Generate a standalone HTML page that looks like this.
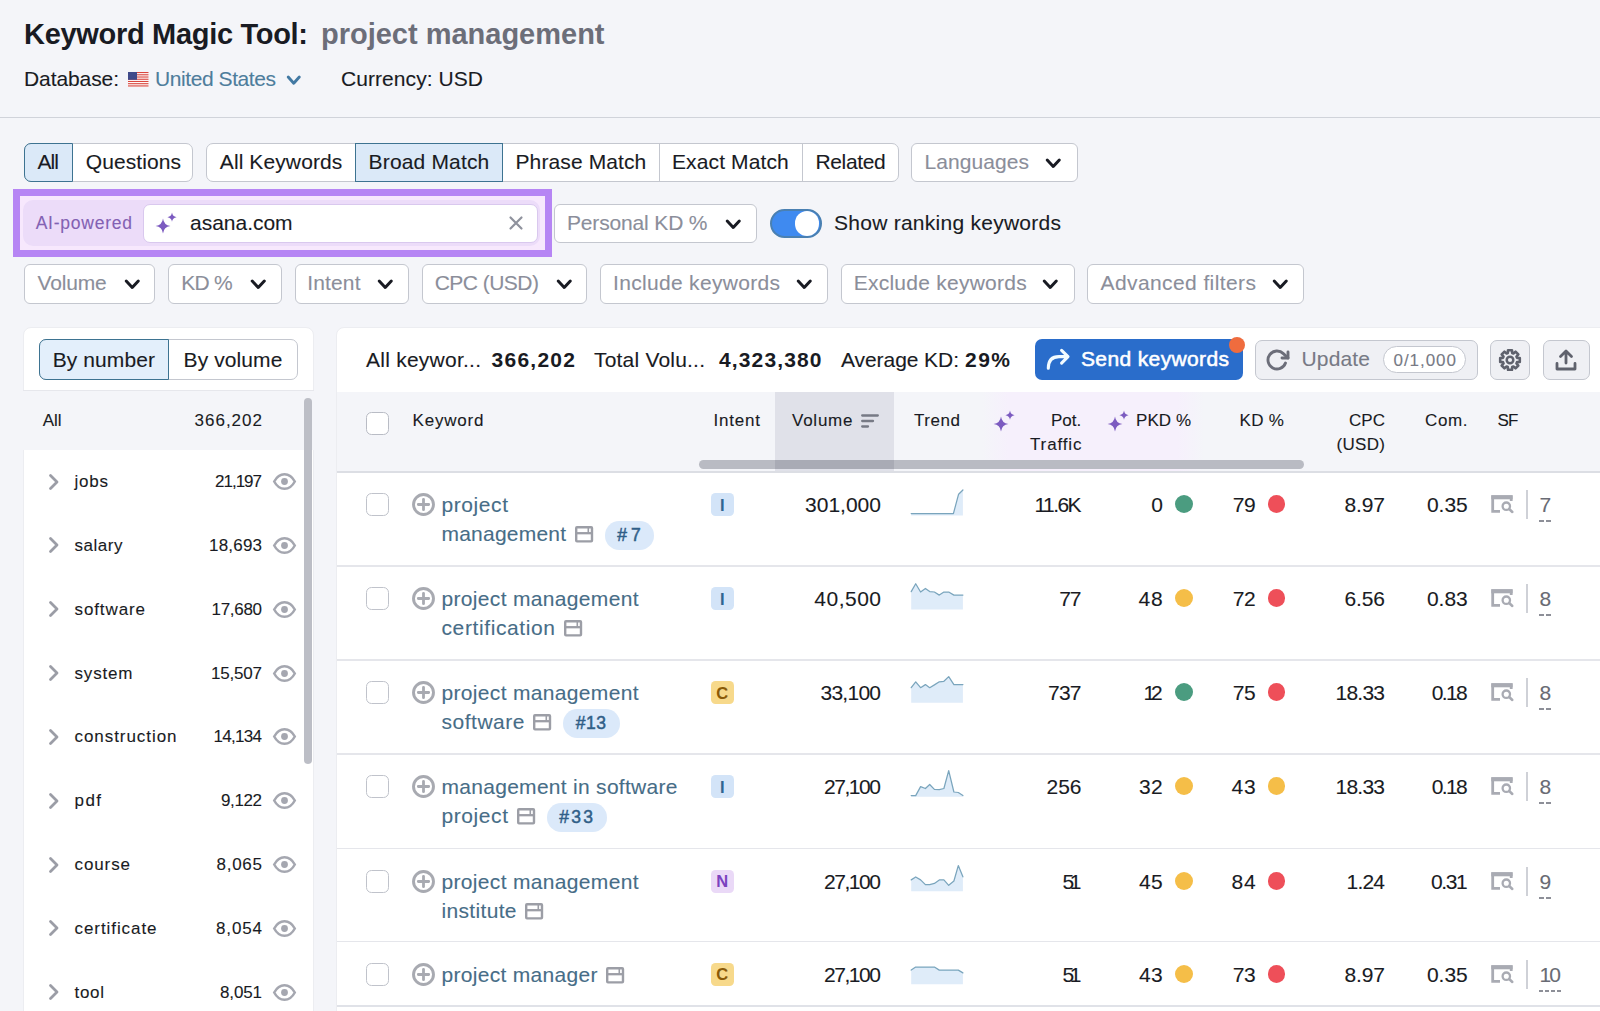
<!DOCTYPE html>
<html lang="en"><head><meta charset="utf-8"><title>Keyword Magic Tool</title>
<style>
html,body{margin:0;padding:0}
body{width:1600px;height:1011px;overflow:hidden;background:#f4f5f9;font-family:"Liberation Sans", Arial, sans-serif;position:relative}
.a{position:absolute;box-sizing:border-box}
.t{position:absolute;white-space:nowrap;-webkit-text-stroke:0.1px currentColor}
svg{position:absolute;overflow:visible}
</style></head><body>
<svg style="left:128px;top:72px" width="20.5" height="14.5" viewBox="0 0 20.5 14.5" ><rect width="20.5" height="14.5" fill="#fff"/><rect y="0.00" width="20.5" height="1.12" fill="#d9463f"/><rect y="2.23" width="20.5" height="1.12" fill="#d9463f"/><rect y="4.46" width="20.5" height="1.12" fill="#d9463f"/><rect y="6.69" width="20.5" height="1.12" fill="#d9463f"/><rect y="8.92" width="20.5" height="1.12" fill="#d9463f"/><rect y="11.15" width="20.5" height="1.12" fill="#d9463f"/><rect y="13.38" width="20.5" height="1.12" fill="#d9463f"/><rect width="9" height="7.8" fill="#3f4a8a"/></svg>
<svg style="left:287.25px;top:76.4px" width="13.5" height="8.2" viewBox="0 0 13.5 8.2" ><path d="M1.2 1 L6.75 7.199999999999999 L12.3 1" fill="none" stroke="#4279a3" stroke-width="2.9" stroke-linecap="round" stroke-linejoin="round"/></svg>
<div class="a" style="left:0px;top:116.8px;width:1600px;height:1.6px;background:#d0d3da;"></div>
<div class="a" style="left:24px;top:142.7px;width:169.3px;height:39.6px;background:#fff;border:1px solid #c4c7cf;border-radius:7px;"></div>
<div class="a" style="left:24px;top:142.7px;width:49px;height:39.6px;background:#dbe9f8;border:1.4px solid #3d7391;border-radius:7px 0 0 7px;"></div>
<div class="a" style="left:206px;top:142.7px;width:693.3px;height:39.6px;background:#fff;border:1px solid #c4c7cf;border-radius:7px;"></div>
<div class="a" style="left:354.5px;top:142.7px;width:148.3px;height:39.6px;background:#dbe9f8;border:1.4px solid #3d7391;"></div>
<div class="a" style="left:659px;top:142.7px;width:1px;height:39.6px;background:#c4c7cf;"></div>
<div class="a" style="left:801.8px;top:142.7px;width:1px;height:39.6px;background:#c4c7cf;"></div>
<div class="a" style="left:911px;top:142.7px;width:166.5px;height:39.6px;background:#fff;border:1px solid #c4c7cf;border-radius:6px;"></div>
<svg style="left:1045.75px;top:158.75px" width="14.5" height="8.5" viewBox="0 0 14.5 8.5" ><path d="M1.2 1 L7.25 7.5 L13.3 1" fill="none" stroke="#191b23" stroke-width="3" stroke-linecap="round" stroke-linejoin="round"/></svg>
<div class="a" style="left:13px;top:189px;width:538.5px;height:68px;background:#f7e8fd;border:7px solid #b685f4;"></div>
<div class="a" style="left:23.3px;top:200px;width:517px;height:46.3px;background:#ecdcf9;border-radius:10px;"></div>
<div class="a" style="left:142.6px;top:203.6px;width:395.4px;height:39px;background:#fff;border:1px solid #d9c8ee;border-radius:7px;"></div>
<svg style="left:151px;top:206.3px" width="30" height="30" viewBox="0 0 30 30" ><path d="M12 12.6 Q12.814 19.186 19.4 20 Q12.814 20.814 12 27.4 Q11.186 20.814 4.6 20 Q11.186 19.186 12 12.6 Z M21 6.6 Q21.506 10.693999999999999 25.6 11.2 Q21.506 11.706 21 15.799999999999999 Q20.494 11.706 16.4 11.2 Q20.494 10.693999999999999 21 6.6 Z" fill="#7c5bc0"/></svg>
<svg style="left:508.5px;top:215.5px" width="14" height="14" viewBox="0 0 14 14" ><path d="M1.5 1.5 L12.5 12.5 M12.5 1.5 L1.5 12.5" stroke="#8f929d" stroke-width="2.2" stroke-linecap="round"/></svg>
<div class="a" style="left:554px;top:204px;width:203px;height:38.7px;background:#fff;border:1px solid #c4c7cf;border-radius:6px;"></div>
<svg style="left:725.75px;top:219.6px" width="14.5" height="8.5" viewBox="0 0 14.5 8.5" ><path d="M1.2 1 L7.25 7.5 L13.3 1" fill="none" stroke="#191b23" stroke-width="3" stroke-linecap="round" stroke-linejoin="round"/></svg>
<div class="a" style="left:769.7px;top:208.8px;width:52.4px;height:29.2px;background:#3f8af0;border:2px solid #4a80b2;border-radius:14.6px;"></div>
<div class="a" style="left:794.6px;top:211.3px;width:24.6px;height:24.4px;background:#fff;border-radius:12.3px;"></div>
<div class="a" style="left:24px;top:264.4px;width:131px;height:39.4px;background:#fff;border:1px solid #c4c7cf;border-radius:6px;"></div>
<svg style="left:124.75px;top:280.34999999999997px" width="14.5" height="8.5" viewBox="0 0 14.5 8.5" ><path d="M1.2 1 L7.25 7.5 L13.3 1" fill="none" stroke="#191b23" stroke-width="3" stroke-linecap="round" stroke-linejoin="round"/></svg>
<div class="a" style="left:168.4px;top:264.4px;width:113.6px;height:39.4px;background:#fff;border:1px solid #c4c7cf;border-radius:6px;"></div>
<svg style="left:250.75px;top:280.34999999999997px" width="14.5" height="8.5" viewBox="0 0 14.5 8.5" ><path d="M1.2 1 L7.25 7.5 L13.3 1" fill="none" stroke="#191b23" stroke-width="3" stroke-linecap="round" stroke-linejoin="round"/></svg>
<div class="a" style="left:295px;top:264.4px;width:113.80000000000001px;height:39.4px;background:#fff;border:1px solid #c4c7cf;border-radius:6px;"></div>
<svg style="left:377.75px;top:280.34999999999997px" width="14.5" height="8.5" viewBox="0 0 14.5 8.5" ><path d="M1.2 1 L7.25 7.5 L13.3 1" fill="none" stroke="#191b23" stroke-width="3" stroke-linecap="round" stroke-linejoin="round"/></svg>
<div class="a" style="left:422.3px;top:264.4px;width:164.7px;height:39.4px;background:#fff;border:1px solid #c4c7cf;border-radius:6px;"></div>
<svg style="left:556.75px;top:280.34999999999997px" width="14.5" height="8.5" viewBox="0 0 14.5 8.5" ><path d="M1.2 1 L7.25 7.5 L13.3 1" fill="none" stroke="#191b23" stroke-width="3" stroke-linecap="round" stroke-linejoin="round"/></svg>
<div class="a" style="left:600px;top:264.4px;width:228px;height:39.4px;background:#fff;border:1px solid #c4c7cf;border-radius:6px;"></div>
<svg style="left:797.25px;top:280.34999999999997px" width="14.5" height="8.5" viewBox="0 0 14.5 8.5" ><path d="M1.2 1 L7.25 7.5 L13.3 1" fill="none" stroke="#191b23" stroke-width="3" stroke-linecap="round" stroke-linejoin="round"/></svg>
<div class="a" style="left:841px;top:264.4px;width:233.5px;height:39.4px;background:#fff;border:1px solid #c4c7cf;border-radius:6px;"></div>
<svg style="left:1043.05px;top:280.34999999999997px" width="14.5" height="8.5" viewBox="0 0 14.5 8.5" ><path d="M1.2 1 L7.25 7.5 L13.3 1" fill="none" stroke="#191b23" stroke-width="3" stroke-linecap="round" stroke-linejoin="round"/></svg>
<div class="a" style="left:1087px;top:264.4px;width:217px;height:39.4px;background:#fff;border:1px solid #c4c7cf;border-radius:6px;"></div>
<svg style="left:1272.75px;top:280.34999999999997px" width="14.5" height="8.5" viewBox="0 0 14.5 8.5" ><path d="M1.2 1 L7.25 7.5 L13.3 1" fill="none" stroke="#191b23" stroke-width="3" stroke-linecap="round" stroke-linejoin="round"/></svg>
<div class="a" style="left:22.5px;top:327.3px;width:291.5px;height:700px;background:#fff;border:1px solid #ecedf1;border-radius:8px 8px 0 0;"></div>
<div class="a" style="left:38.6px;top:339.4px;width:259.2px;height:40.3px;background:#fff;border:1px solid #c4c7cf;border-radius:7px;"></div>
<div class="a" style="left:38.6px;top:339.4px;width:130px;height:40.3px;background:#e3effb;border:1.4px solid #3d7391;border-radius:7px 0 0 7px;"></div>
<div class="a" style="left:23px;top:390px;width:291px;height:1px;background:#e6e7ec;"></div>
<div class="a" style="left:23px;top:391px;width:290.5px;height:58.5px;background:#f4f5f9;"></div>
<div class="a" style="left:303.6px;top:398px;width:8px;height:366px;background:#bcbec6;border-radius:4px;"></div>
<svg style="left:48.5px;top:473.5px" width="10" height="16" viewBox="0 0 10 16" ><path d="M1.5 1.5 L8 8 L1.5 14.5" fill="none" stroke="#9b9da6" stroke-width="2.8" stroke-linecap="round" stroke-linejoin="round"/></svg>
<svg style="left:273px;top:473.0px" width="23" height="17" viewBox="0 0 23 17" ><path d="M1.2 8.5 C4 3.2 7.6 1.2 11.5 1.2 C15.4 1.2 19 3.2 21.8 8.5 C19 13.8 15.4 15.8 11.5 15.8 C7.6 15.8 4 13.8 1.2 8.5 Z" fill="none" stroke="#a5a7b0" stroke-width="2.5"/><circle cx="11.5" cy="8.5" r="3.4" fill="#a5a7b0"/></svg>
<svg style="left:48.5px;top:537.35px" width="10" height="16" viewBox="0 0 10 16" ><path d="M1.5 1.5 L8 8 L1.5 14.5" fill="none" stroke="#9b9da6" stroke-width="2.8" stroke-linecap="round" stroke-linejoin="round"/></svg>
<svg style="left:273px;top:536.85px" width="23" height="17" viewBox="0 0 23 17" ><path d="M1.2 8.5 C4 3.2 7.6 1.2 11.5 1.2 C15.4 1.2 19 3.2 21.8 8.5 C19 13.8 15.4 15.8 11.5 15.8 C7.6 15.8 4 13.8 1.2 8.5 Z" fill="none" stroke="#a5a7b0" stroke-width="2.5"/><circle cx="11.5" cy="8.5" r="3.4" fill="#a5a7b0"/></svg>
<svg style="left:48.5px;top:601.2px" width="10" height="16" viewBox="0 0 10 16" ><path d="M1.5 1.5 L8 8 L1.5 14.5" fill="none" stroke="#9b9da6" stroke-width="2.8" stroke-linecap="round" stroke-linejoin="round"/></svg>
<svg style="left:273px;top:600.7px" width="23" height="17" viewBox="0 0 23 17" ><path d="M1.2 8.5 C4 3.2 7.6 1.2 11.5 1.2 C15.4 1.2 19 3.2 21.8 8.5 C19 13.8 15.4 15.8 11.5 15.8 C7.6 15.8 4 13.8 1.2 8.5 Z" fill="none" stroke="#a5a7b0" stroke-width="2.5"/><circle cx="11.5" cy="8.5" r="3.4" fill="#a5a7b0"/></svg>
<svg style="left:48.5px;top:665.05px" width="10" height="16" viewBox="0 0 10 16" ><path d="M1.5 1.5 L8 8 L1.5 14.5" fill="none" stroke="#9b9da6" stroke-width="2.8" stroke-linecap="round" stroke-linejoin="round"/></svg>
<svg style="left:273px;top:664.55px" width="23" height="17" viewBox="0 0 23 17" ><path d="M1.2 8.5 C4 3.2 7.6 1.2 11.5 1.2 C15.4 1.2 19 3.2 21.8 8.5 C19 13.8 15.4 15.8 11.5 15.8 C7.6 15.8 4 13.8 1.2 8.5 Z" fill="none" stroke="#a5a7b0" stroke-width="2.5"/><circle cx="11.5" cy="8.5" r="3.4" fill="#a5a7b0"/></svg>
<svg style="left:48.5px;top:728.9px" width="10" height="16" viewBox="0 0 10 16" ><path d="M1.5 1.5 L8 8 L1.5 14.5" fill="none" stroke="#9b9da6" stroke-width="2.8" stroke-linecap="round" stroke-linejoin="round"/></svg>
<svg style="left:273px;top:728.4px" width="23" height="17" viewBox="0 0 23 17" ><path d="M1.2 8.5 C4 3.2 7.6 1.2 11.5 1.2 C15.4 1.2 19 3.2 21.8 8.5 C19 13.8 15.4 15.8 11.5 15.8 C7.6 15.8 4 13.8 1.2 8.5 Z" fill="none" stroke="#a5a7b0" stroke-width="2.5"/><circle cx="11.5" cy="8.5" r="3.4" fill="#a5a7b0"/></svg>
<svg style="left:48.5px;top:792.75px" width="10" height="16" viewBox="0 0 10 16" ><path d="M1.5 1.5 L8 8 L1.5 14.5" fill="none" stroke="#9b9da6" stroke-width="2.8" stroke-linecap="round" stroke-linejoin="round"/></svg>
<svg style="left:273px;top:792.25px" width="23" height="17" viewBox="0 0 23 17" ><path d="M1.2 8.5 C4 3.2 7.6 1.2 11.5 1.2 C15.4 1.2 19 3.2 21.8 8.5 C19 13.8 15.4 15.8 11.5 15.8 C7.6 15.8 4 13.8 1.2 8.5 Z" fill="none" stroke="#a5a7b0" stroke-width="2.5"/><circle cx="11.5" cy="8.5" r="3.4" fill="#a5a7b0"/></svg>
<svg style="left:48.5px;top:856.6px" width="10" height="16" viewBox="0 0 10 16" ><path d="M1.5 1.5 L8 8 L1.5 14.5" fill="none" stroke="#9b9da6" stroke-width="2.8" stroke-linecap="round" stroke-linejoin="round"/></svg>
<svg style="left:273px;top:856.1px" width="23" height="17" viewBox="0 0 23 17" ><path d="M1.2 8.5 C4 3.2 7.6 1.2 11.5 1.2 C15.4 1.2 19 3.2 21.8 8.5 C19 13.8 15.4 15.8 11.5 15.8 C7.6 15.8 4 13.8 1.2 8.5 Z" fill="none" stroke="#a5a7b0" stroke-width="2.5"/><circle cx="11.5" cy="8.5" r="3.4" fill="#a5a7b0"/></svg>
<svg style="left:48.5px;top:920.45px" width="10" height="16" viewBox="0 0 10 16" ><path d="M1.5 1.5 L8 8 L1.5 14.5" fill="none" stroke="#9b9da6" stroke-width="2.8" stroke-linecap="round" stroke-linejoin="round"/></svg>
<svg style="left:273px;top:919.95px" width="23" height="17" viewBox="0 0 23 17" ><path d="M1.2 8.5 C4 3.2 7.6 1.2 11.5 1.2 C15.4 1.2 19 3.2 21.8 8.5 C19 13.8 15.4 15.8 11.5 15.8 C7.6 15.8 4 13.8 1.2 8.5 Z" fill="none" stroke="#a5a7b0" stroke-width="2.5"/><circle cx="11.5" cy="8.5" r="3.4" fill="#a5a7b0"/></svg>
<svg style="left:48.5px;top:984.3px" width="10" height="16" viewBox="0 0 10 16" ><path d="M1.5 1.5 L8 8 L1.5 14.5" fill="none" stroke="#9b9da6" stroke-width="2.8" stroke-linecap="round" stroke-linejoin="round"/></svg>
<svg style="left:273px;top:983.8px" width="23" height="17" viewBox="0 0 23 17" ><path d="M1.2 8.5 C4 3.2 7.6 1.2 11.5 1.2 C15.4 1.2 19 3.2 21.8 8.5 C19 13.8 15.4 15.8 11.5 15.8 C7.6 15.8 4 13.8 1.2 8.5 Z" fill="none" stroke="#a5a7b0" stroke-width="2.5"/><circle cx="11.5" cy="8.5" r="3.4" fill="#a5a7b0"/></svg>
<div class="a" style="left:336px;top:327.3px;width:1270px;height:700px;background:#fff;border:1px solid #ecedf1;border-radius:8px 0 0 0;"></div>
<div class="a" style="left:1034.5px;top:339.4px;width:208.7px;height:40.2px;background:#2a6dcb;border-radius:7px;"></div>
<svg style="left:1040px;top:345px" width="34" height="30" viewBox="0 0 34 30" ><path d="M8.3 23.3 C8.3 15.2 12 11.6 19 11.6 L27.6 11.6 M21.6 5.3 L28 11.6 L21.6 18.1" fill="none" stroke="#f2fbff" stroke-width="3.1" stroke-linecap="round" stroke-linejoin="round"/></svg>
<div class="a" style="left:1228.8px;top:336.9px;width:16.5px;height:16.5px;background:#ef6c3e;border-radius:8.25px;"></div>
<div class="a" style="left:1255px;top:339.8px;width:222.7px;height:39.8px;background:#eff0f4;border:1px solid #c4c7cf;border-radius:7px;"></div>
<svg style="left:1265.3px;top:347.6px" width="24" height="24" viewBox="0 0 24 24" ><polyline points="23 4 23 10 17 10" fill="none" stroke="#6c6e79" stroke-width="2.9" stroke-linecap="round" stroke-linejoin="round"/><path d="M20.49 15a9 9 0 1 1-2.12-9.36L23 10" fill="none" stroke="#6c6e79" stroke-width="2.9" stroke-linecap="round" stroke-linejoin="round"/></svg>
<div class="a" style="left:1383px;top:346px;width:83px;height:27px;background:#fff;border:1px solid #c4c7cf;border-radius:13.5px;"></div>
<div class="a" style="left:1490px;top:339.8px;width:40px;height:39.8px;background:#eff0f4;border:1px solid #c4c7cf;border-radius:7px;"></div>
<svg style="left:1499.3px;top:349px" width="22" height="22" viewBox="0 0 22 22" ><path d="M17.97 8.84 L20.80 9.01 L20.80 12.99 L17.97 13.16 L17.46 14.41 L19.33 16.53 L16.53 19.33 L14.41 17.46 L13.16 17.97 L12.99 20.80 L9.01 20.80 L8.84 17.97 L7.59 17.46 L5.47 19.33 L2.67 16.53 L4.54 14.41 L4.03 13.16 L1.20 12.99 L1.20 9.01 L4.03 8.84 L4.54 7.59 L2.67 5.47 L5.47 2.67 L7.59 4.54 L8.84 4.03 L9.01 1.20 L12.99 1.20 L13.16 4.03 L14.41 4.54 L16.53 2.67 L19.33 5.47 L17.46 7.59 Z" fill="none" stroke="#5f626d" stroke-width="2.6" stroke-linejoin="round"/><circle cx="11" cy="11" r="3.3" fill="none" stroke="#5f626d" stroke-width="2.5"/></svg>
<div class="a" style="left:1542.5px;top:339.8px;width:47px;height:39.8px;background:#eff0f4;border:1px solid #c4c7cf;border-radius:7px;"></div>
<svg style="left:1555px;top:348.5px" width="22" height="22" viewBox="0 0 22 22" ><path d="M11 14 L11 2.5 M5.5 7.5 L11 2 L16.5 7.5" fill="none" stroke="#5f626d" stroke-width="2.8" stroke-linecap="round" stroke-linejoin="round"/><path d="M2 14.5 L2 20 L20 20 L20 14.5" fill="none" stroke="#5f626d" stroke-width="2.8" stroke-linecap="round" stroke-linejoin="round"/></svg>
<div class="a" style="left:336.5px;top:392px;width:1264px;height:79.5px;background:#f4f5f9;"></div>
<div class="a" style="left:982px;top:392px;width:222px;height:79.5px;background:linear-gradient(90deg,rgba(246,240,252,0) 0,#f6f0fc 12%,#f6f0fc 88%,rgba(246,240,252,0) 100%);"></div>
<div class="a" style="left:775px;top:392px;width:119px;height:79.5px;background:#e0e1e9;"></div>
<div class="a" style="left:336.5px;top:471.3px;width:1264px;height:1.4px;background:#dcdee4;"></div>
<div class="a" style="left:699.4px;top:460px;width:604.6px;height:9px;background:#b9bbc3;border-radius:4.5px;"></div>
<div class="a" style="left:775px;top:460px;width:119px;height:9px;background:#a9abb5;"></div>
<div class="a" style="left:366px;top:412px;width:22.6px;height:22.6px;background:#fff;border:1.3px solid #b9bcc5;border-radius:5.5px;"></div>
<svg style="left:861px;top:413.5px" width="18" height="14" viewBox="0 0 18 14" ><path d="M1.2 1.5 H16.8 M1.2 7 H12 M1.2 12.5 H7" stroke="#777a85" stroke-width="2.3" stroke-linecap="round"/></svg>
<svg style="left:988.7px;top:403.7px" width="30" height="30" viewBox="0 0 30 30" ><path d="M12 12.6 Q12.814 19.186 19.4 20 Q12.814 20.814 12 27.4 Q11.186 20.814 4.6 20 Q11.186 19.186 12 12.6 Z M21 6.6 Q21.506 10.693999999999999 25.6 11.2 Q21.506 11.706 21 15.799999999999999 Q20.494 11.706 16.4 11.2 Q20.494 10.693999999999999 21 6.6 Z" fill="#7c5bc0"/></svg>
<svg style="left:1102.7px;top:403.7px" width="30" height="30" viewBox="0 0 30 30" ><path d="M12 12.6 Q12.814 19.186 19.4 20 Q12.814 20.814 12 27.4 Q11.186 20.814 4.6 20 Q11.186 19.186 12 12.6 Z M21 6.6 Q21.506 10.693999999999999 25.6 11.2 Q21.506 11.706 21 15.799999999999999 Q20.494 11.706 16.4 11.2 Q20.494 10.693999999999999 21 6.6 Z" fill="#7c5bc0"/></svg>
<div class="a" style="left:366px;top:493.3px;width:22.6px;height:22.6px;background:#fff;border:1.4px solid #c0c3cb;border-radius:5.5px;"></div>
<svg style="left:412px;top:493.0px" width="23" height="23" viewBox="0 0 23 23" ><circle cx="11.5" cy="11.5" r="10" fill="none" stroke="#a8aab1" stroke-width="2.9"/><path d="M6.3 11.5 H16.7 M11.5 6.3 V16.7" stroke="#a8aab1" stroke-width="2.8" stroke-linecap="round"/></svg>
<svg style="left:574.8px;top:526.3000000000001px" width="18.2" height="16.6" viewBox="0 0 18.2 16.6" ><rect x="1.2" y="1.2" width="15.8" height="14.2" rx="0.8" fill="none" stroke="#9c9ea6" stroke-width="2.4"/><path d="M1.2 7.2 H17" stroke="#9c9ea6" stroke-width="2.3"/><path d="M13.3 1.2 V7.2" stroke="#9c9ea6" stroke-width="1.6"/></svg>
<div class="a" style="left:604.5px;top:521.2px;width:49.8px;height:28.5px;background:#dbe9fa;border-radius:14.25px;"></div>
<div class="a" style="left:710.5px;top:493.2px;width:23.5px;height:23px;background:#d3e4f8;border-radius:4.5px;"></div>
<svg style="left:900px;top:472px" width="80" height="70" viewBox="900 472 80 70" ><polygon points="911.2,515.6 911.2,513.6 953.4,513.6 958.6,494.2 962.9,490.0 962.9,515.6" fill="#dfecf9"/><polyline points="911.2,513.6 953.4,513.6 958.6,494.2 962.9,490.0" fill="none" stroke="#7aa5bd" stroke-width="1.25" stroke-linejoin="round" stroke-linecap="round"/></svg>
<div class="a" style="left:1174.8px;top:495.4px;width:17.9px;height:17.9px;background:#4b9c80;border-radius:9px;"></div>
<div class="a" style="left:1267.5px;top:495.4px;width:17.9px;height:17.9px;background:#ee4f59;border-radius:9px;"></div>
<svg style="left:1490px;top:494.0px" width="24" height="20" viewBox="0 0 24 20" ><path d="M10 17.4 H2.7 V2.7 H21.2 V7" fill="none" stroke="#a9abb3" stroke-width="2.8"/><path d="M1.3 3.3 H22.6" stroke="#a9abb3" stroke-width="4"/><circle cx="16.3" cy="12.2" r="3.7" fill="none" stroke="#a9abb3" stroke-width="2.3"/><path d="M19.2 15 L22.3 18" stroke="#a9abb3" stroke-width="2.5" stroke-linecap="round"/></svg>
<div class="a" style="left:1526px;top:489.8px;width:1.5px;height:29.5px;background:#cfd1d7;"></div>
<div class="a" style="left:1539.2px;top:520.3px;width:4.6px;height:1.7px;background:#8d8f98;"></div>
<div class="a" style="left:1546.4px;top:520.3px;width:4.6px;height:1.7px;background:#8d8f98;"></div>
<div class="a" style="left:336.5px;top:565.4px;width:1264px;height:1.3px;background:#e5e6eb;"></div>
<div class="a" style="left:366px;top:587.3px;width:22.6px;height:22.6px;background:#fff;border:1.4px solid #c0c3cb;border-radius:5.5px;"></div>
<svg style="left:412px;top:587.0px" width="23" height="23" viewBox="0 0 23 23" ><circle cx="11.5" cy="11.5" r="10" fill="none" stroke="#a8aab1" stroke-width="2.9"/><path d="M6.3 11.5 H16.7 M11.5 6.3 V16.7" stroke="#a8aab1" stroke-width="2.8" stroke-linecap="round"/></svg>
<svg style="left:563.8px;top:620.3000000000001px" width="18.2" height="16.6" viewBox="0 0 18.2 16.6" ><rect x="1.2" y="1.2" width="15.8" height="14.2" rx="0.8" fill="none" stroke="#9c9ea6" stroke-width="2.4"/><path d="M1.2 7.2 H17" stroke="#9c9ea6" stroke-width="2.3"/><path d="M13.3 1.2 V7.2" stroke="#9c9ea6" stroke-width="1.6"/></svg>
<div class="a" style="left:710.5px;top:587.2px;width:23.5px;height:23px;background:#d3e4f8;border-radius:4.5px;"></div>
<svg style="left:900px;top:566px" width="80" height="70" viewBox="900 566 80 70" ><polygon points="911.2,609.4 911.2,591.6 915.7,583.7 920.6,592.0 925.4,588.5 929.7,591.6 934.4,592.0 939.3,595.1 943.9,592.0 948.7,592.0 953.9,595.1 958.3,595.1 962.9,595.1 962.9,609.4" fill="#dfecf9"/><polyline points="911.2,591.6 915.7,583.7 920.6,592.0 925.4,588.5 929.7,591.6 934.4,592.0 939.3,595.1 943.9,592.0 948.7,592.0 953.9,595.1 958.3,595.1 962.9,595.1" fill="none" stroke="#7aa5bd" stroke-width="1.25" stroke-linejoin="round" stroke-linecap="round"/></svg>
<div class="a" style="left:1174.8px;top:589.4px;width:17.9px;height:17.9px;background:#f5be48;border-radius:9px;"></div>
<div class="a" style="left:1267.5px;top:589.4px;width:17.9px;height:17.9px;background:#ee4f59;border-radius:9px;"></div>
<svg style="left:1490px;top:588.0px" width="24" height="20" viewBox="0 0 24 20" ><path d="M10 17.4 H2.7 V2.7 H21.2 V7" fill="none" stroke="#a9abb3" stroke-width="2.8"/><path d="M1.3 3.3 H22.6" stroke="#a9abb3" stroke-width="4"/><circle cx="16.3" cy="12.2" r="3.7" fill="none" stroke="#a9abb3" stroke-width="2.3"/><path d="M19.2 15 L22.3 18" stroke="#a9abb3" stroke-width="2.5" stroke-linecap="round"/></svg>
<div class="a" style="left:1526px;top:583.8px;width:1.5px;height:29.5px;background:#cfd1d7;"></div>
<div class="a" style="left:1539.2px;top:614.3px;width:4.6px;height:1.7px;background:#8d8f98;"></div>
<div class="a" style="left:1546.4px;top:614.3px;width:4.6px;height:1.7px;background:#8d8f98;"></div>
<div class="a" style="left:336.5px;top:659.4px;width:1264px;height:1.3px;background:#e5e6eb;"></div>
<div class="a" style="left:366px;top:681.3px;width:22.6px;height:22.6px;background:#fff;border:1.4px solid #c0c3cb;border-radius:5.5px;"></div>
<svg style="left:412px;top:681.0px" width="23" height="23" viewBox="0 0 23 23" ><circle cx="11.5" cy="11.5" r="10" fill="none" stroke="#a8aab1" stroke-width="2.9"/><path d="M6.3 11.5 H16.7 M11.5 6.3 V16.7" stroke="#a8aab1" stroke-width="2.8" stroke-linecap="round"/></svg>
<svg style="left:533.3px;top:714.3000000000001px" width="18.2" height="16.6" viewBox="0 0 18.2 16.6" ><rect x="1.2" y="1.2" width="15.8" height="14.2" rx="0.8" fill="none" stroke="#9c9ea6" stroke-width="2.4"/><path d="M1.2 7.2 H17" stroke="#9c9ea6" stroke-width="2.3"/><path d="M13.3 1.2 V7.2" stroke="#9c9ea6" stroke-width="1.6"/></svg>
<div class="a" style="left:563.0px;top:709.2px;width:56.5px;height:28.5px;background:#dbe9fa;border-radius:14.25px;"></div>
<div class="a" style="left:710.5px;top:681.2px;width:23.5px;height:23px;background:#f7d98b;border-radius:4.5px;"></div>
<svg style="left:900px;top:660px" width="80" height="70" viewBox="900 660 80 70" ><polygon points="911.2,702.7 911.2,687.7 915.7,681.8 920.6,687.7 925.4,684.6 929.7,687.7 934.4,684.9 939.3,681.8 943.9,681.3 948.7,676.6 953.9,684.6 958.3,684.6 962.9,684.6 962.9,702.7" fill="#dfecf9"/><polyline points="911.2,687.7 915.7,681.8 920.6,687.7 925.4,684.6 929.7,687.7 934.4,684.9 939.3,681.8 943.9,681.3 948.7,676.6 953.9,684.6 958.3,684.6 962.9,684.6" fill="none" stroke="#7aa5bd" stroke-width="1.25" stroke-linejoin="round" stroke-linecap="round"/></svg>
<div class="a" style="left:1174.8px;top:683.4px;width:17.9px;height:17.9px;background:#4b9c80;border-radius:9px;"></div>
<div class="a" style="left:1267.5px;top:683.4px;width:17.9px;height:17.9px;background:#ee4f59;border-radius:9px;"></div>
<svg style="left:1490px;top:682.0px" width="24" height="20" viewBox="0 0 24 20" ><path d="M10 17.4 H2.7 V2.7 H21.2 V7" fill="none" stroke="#a9abb3" stroke-width="2.8"/><path d="M1.3 3.3 H22.6" stroke="#a9abb3" stroke-width="4"/><circle cx="16.3" cy="12.2" r="3.7" fill="none" stroke="#a9abb3" stroke-width="2.3"/><path d="M19.2 15 L22.3 18" stroke="#a9abb3" stroke-width="2.5" stroke-linecap="round"/></svg>
<div class="a" style="left:1526px;top:677.8px;width:1.5px;height:29.5px;background:#cfd1d7;"></div>
<div class="a" style="left:1539.2px;top:708.3px;width:4.6px;height:1.7px;background:#8d8f98;"></div>
<div class="a" style="left:1546.4px;top:708.3px;width:4.6px;height:1.7px;background:#8d8f98;"></div>
<div class="a" style="left:336.5px;top:753.4px;width:1264px;height:1.3px;background:#e5e6eb;"></div>
<div class="a" style="left:366px;top:775.3px;width:22.6px;height:22.6px;background:#fff;border:1.4px solid #c0c3cb;border-radius:5.5px;"></div>
<svg style="left:412px;top:775.0px" width="23" height="23" viewBox="0 0 23 23" ><circle cx="11.5" cy="11.5" r="10" fill="none" stroke="#a8aab1" stroke-width="2.9"/><path d="M6.3 11.5 H16.7 M11.5 6.3 V16.7" stroke="#a8aab1" stroke-width="2.8" stroke-linecap="round"/></svg>
<svg style="left:516.8px;top:808.3000000000001px" width="18.2" height="16.6" viewBox="0 0 18.2 16.6" ><rect x="1.2" y="1.2" width="15.8" height="14.2" rx="0.8" fill="none" stroke="#9c9ea6" stroke-width="2.4"/><path d="M1.2 7.2 H17" stroke="#9c9ea6" stroke-width="2.3"/><path d="M13.3 1.2 V7.2" stroke="#9c9ea6" stroke-width="1.6"/></svg>
<div class="a" style="left:546.5px;top:803.2px;width:60px;height:28.5px;background:#dbe9fa;border-radius:14.25px;"></div>
<div class="a" style="left:710.5px;top:775.2px;width:23.5px;height:23px;background:#d3e4f8;border-radius:4.5px;"></div>
<svg style="left:900px;top:754px" width="80" height="70" viewBox="900 754 80 70" ><polygon points="911.2,796.8 911.2,795.6 915.7,795.6 920.6,786.6 925.4,788.5 929.7,784.5 934.4,789.4 939.3,789.7 943.9,788.5 948.7,770.7 953.9,792.0 958.3,792.5 962.9,795.6 962.9,796.8" fill="#dfecf9"/><polyline points="911.2,795.6 915.7,795.6 920.6,786.6 925.4,788.5 929.7,784.5 934.4,789.4 939.3,789.7 943.9,788.5 948.7,770.7 953.9,792.0 958.3,792.5 962.9,795.6" fill="none" stroke="#7aa5bd" stroke-width="1.25" stroke-linejoin="round" stroke-linecap="round"/></svg>
<div class="a" style="left:1174.8px;top:777.4px;width:17.9px;height:17.9px;background:#f5be48;border-radius:9px;"></div>
<div class="a" style="left:1267.5px;top:777.4px;width:17.9px;height:17.9px;background:#f5be48;border-radius:9px;"></div>
<svg style="left:1490px;top:776.0px" width="24" height="20" viewBox="0 0 24 20" ><path d="M10 17.4 H2.7 V2.7 H21.2 V7" fill="none" stroke="#a9abb3" stroke-width="2.8"/><path d="M1.3 3.3 H22.6" stroke="#a9abb3" stroke-width="4"/><circle cx="16.3" cy="12.2" r="3.7" fill="none" stroke="#a9abb3" stroke-width="2.3"/><path d="M19.2 15 L22.3 18" stroke="#a9abb3" stroke-width="2.5" stroke-linecap="round"/></svg>
<div class="a" style="left:1526px;top:771.8px;width:1.5px;height:29.5px;background:#cfd1d7;"></div>
<div class="a" style="left:1539.2px;top:802.3px;width:4.6px;height:1.7px;background:#8d8f98;"></div>
<div class="a" style="left:1546.4px;top:802.3px;width:4.6px;height:1.7px;background:#8d8f98;"></div>
<div class="a" style="left:336.5px;top:848.1999999999999px;width:1264px;height:1.3px;background:#e5e6eb;"></div>
<div class="a" style="left:366px;top:870.0999999999999px;width:22.6px;height:22.6px;background:#fff;border:1.4px solid #c0c3cb;border-radius:5.5px;"></div>
<svg style="left:412px;top:869.8px" width="23" height="23" viewBox="0 0 23 23" ><circle cx="11.5" cy="11.5" r="10" fill="none" stroke="#a8aab1" stroke-width="2.9"/><path d="M6.3 11.5 H16.7 M11.5 6.3 V16.7" stroke="#a8aab1" stroke-width="2.8" stroke-linecap="round"/></svg>
<svg style="left:525.3px;top:903.1px" width="18.2" height="16.6" viewBox="0 0 18.2 16.6" ><rect x="1.2" y="1.2" width="15.8" height="14.2" rx="0.8" fill="none" stroke="#9c9ea6" stroke-width="2.4"/><path d="M1.2 7.2 H17" stroke="#9c9ea6" stroke-width="2.3"/><path d="M13.3 1.2 V7.2" stroke="#9c9ea6" stroke-width="1.6"/></svg>
<div class="a" style="left:710.5px;top:870.0px;width:23.5px;height:23px;background:#ead9f7;border-radius:4.5px;"></div>
<svg style="left:900px;top:848px" width="80" height="70" viewBox="900 848 80 70" ><polygon points="911.2,891.3 911.2,879.9 915.7,877.0 920.6,879.9 925.4,884.6 929.7,884.6 934.4,883.4 939.3,879.9 943.9,879.9 948.7,885.3 953.9,881.0 958.3,865.6 962.9,876.8 962.9,891.3" fill="#dfecf9"/><polyline points="911.2,879.9 915.7,877.0 920.6,879.9 925.4,884.6 929.7,884.6 934.4,883.4 939.3,879.9 943.9,879.9 948.7,885.3 953.9,881.0 958.3,865.6 962.9,876.8" fill="none" stroke="#7aa5bd" stroke-width="1.25" stroke-linejoin="round" stroke-linecap="round"/></svg>
<div class="a" style="left:1174.8px;top:872.1999999999999px;width:17.9px;height:17.9px;background:#f5be48;border-radius:9px;"></div>
<div class="a" style="left:1267.5px;top:872.1999999999999px;width:17.9px;height:17.9px;background:#ee4f59;border-radius:9px;"></div>
<svg style="left:1490px;top:870.8px" width="24" height="20" viewBox="0 0 24 20" ><path d="M10 17.4 H2.7 V2.7 H21.2 V7" fill="none" stroke="#a9abb3" stroke-width="2.8"/><path d="M1.3 3.3 H22.6" stroke="#a9abb3" stroke-width="4"/><circle cx="16.3" cy="12.2" r="3.7" fill="none" stroke="#a9abb3" stroke-width="2.3"/><path d="M19.2 15 L22.3 18" stroke="#a9abb3" stroke-width="2.5" stroke-linecap="round"/></svg>
<div class="a" style="left:1526px;top:866.5999999999999px;width:1.5px;height:29.5px;background:#cfd1d7;"></div>
<div class="a" style="left:1539.2px;top:897.0999999999999px;width:4.6px;height:1.7px;background:#8d8f98;"></div>
<div class="a" style="left:1546.4px;top:897.0999999999999px;width:4.6px;height:1.7px;background:#8d8f98;"></div>
<div class="a" style="left:336.5px;top:941.1999999999999px;width:1264px;height:1.3px;background:#e5e6eb;"></div>
<div class="a" style="left:366px;top:963.0999999999999px;width:22.6px;height:22.6px;background:#fff;border:1.4px solid #c0c3cb;border-radius:5.5px;"></div>
<svg style="left:412px;top:962.8px" width="23" height="23" viewBox="0 0 23 23" ><circle cx="11.5" cy="11.5" r="10" fill="none" stroke="#a8aab1" stroke-width="2.9"/><path d="M6.3 11.5 H16.7 M11.5 6.3 V16.7" stroke="#a8aab1" stroke-width="2.8" stroke-linecap="round"/></svg>
<svg style="left:606.3px;top:966.9px" width="18.2" height="16.6" viewBox="0 0 18.2 16.6" ><rect x="1.2" y="1.2" width="15.8" height="14.2" rx="0.8" fill="none" stroke="#9c9ea6" stroke-width="2.4"/><path d="M1.2 7.2 H17" stroke="#9c9ea6" stroke-width="2.3"/><path d="M13.3 1.2 V7.2" stroke="#9c9ea6" stroke-width="1.6"/></svg>
<div class="a" style="left:710.5px;top:963.0px;width:23.5px;height:23px;background:#f7d98b;border-radius:4.5px;"></div>
<svg style="left:900px;top:941px" width="80" height="70" viewBox="900 941 80 70" ><polygon points="911.2,984.3 911.2,970.1 915.7,967.0 934.4,967.0 939.3,970.1 958.3,970.1 962.9,972.9 962.9,984.3" fill="#dfecf9"/><polyline points="911.2,970.1 915.7,967.0 934.4,967.0 939.3,970.1 958.3,970.1 962.9,972.9" fill="none" stroke="#7aa5bd" stroke-width="1.25" stroke-linejoin="round" stroke-linecap="round"/></svg>
<div class="a" style="left:1174.8px;top:965.1999999999999px;width:17.9px;height:17.9px;background:#f5be48;border-radius:9px;"></div>
<div class="a" style="left:1267.5px;top:965.1999999999999px;width:17.9px;height:17.9px;background:#ee4f59;border-radius:9px;"></div>
<svg style="left:1490px;top:963.8px" width="24" height="20" viewBox="0 0 24 20" ><path d="M10 17.4 H2.7 V2.7 H21.2 V7" fill="none" stroke="#a9abb3" stroke-width="2.8"/><path d="M1.3 3.3 H22.6" stroke="#a9abb3" stroke-width="4"/><circle cx="16.3" cy="12.2" r="3.7" fill="none" stroke="#a9abb3" stroke-width="2.3"/><path d="M19.2 15 L22.3 18" stroke="#a9abb3" stroke-width="2.5" stroke-linecap="round"/></svg>
<div class="a" style="left:1526px;top:959.5999999999999px;width:1.5px;height:29.5px;background:#cfd1d7;"></div>
<div class="a" style="left:1539.4px;top:990.0999999999999px;width:3.8px;height:1.7px;background:#8d8f98;"></div>
<div class="a" style="left:1545.25px;top:990.0999999999999px;width:3.8px;height:1.7px;background:#8d8f98;"></div>
<div class="a" style="left:1551.1000000000001px;top:990.0999999999999px;width:3.8px;height:1.7px;background:#8d8f98;"></div>
<div class="a" style="left:1556.95px;top:990.0999999999999px;width:3.8px;height:1.7px;background:#8d8f98;"></div>
<div class="a" style="left:336.5px;top:1005.3px;width:1264px;height:1.4px;background:#e0e2e8;"></div>
<span class="t" style="top:15.00px;font-size:29px;line-height:38px;letter-spacing:-0.305px;color:#191b23;font-weight:700;-webkit-text-stroke:0;left:24.0px;">Keyword Magic Tool:</span>
<span class="t" style="top:15.00px;font-size:29px;line-height:38px;letter-spacing:-0.008px;color:#6c6e79;font-weight:700;-webkit-text-stroke:0;left:321.0px;">project management</span>
<span class="t" style="top:64.00px;font-size:21px;line-height:29px;letter-spacing:-0.092px;color:#191b23;left:24.0px;">Database:</span>
<span class="t" style="top:64.00px;font-size:21px;line-height:29px;letter-spacing:-0.423px;color:#4e7d9c;left:155.0px;">United States</span>
<span class="t" style="top:64.00px;font-size:21px;line-height:29px;letter-spacing:0.066px;color:#191b23;left:341.0px;">Currency: USD</span>
<span class="t" style="top:147.00px;font-size:21px;line-height:29px;letter-spacing:-1.022px;color:#191b23;left:37.5px;">All</span>
<span class="t" style="top:147.00px;font-size:21px;line-height:29px;letter-spacing:0.080px;color:#191b23;left:85.8px;">Questions</span>
<span class="t" style="top:147.00px;font-size:21px;line-height:29px;letter-spacing:0.101px;color:#191b23;left:219.8px;">All Keywords</span>
<span class="t" style="top:147.00px;font-size:21px;line-height:29px;letter-spacing:0.164px;color:#191b23;left:368.6px;">Broad Match</span>
<span class="t" style="top:147.00px;font-size:21px;line-height:29px;letter-spacing:0.112px;color:#191b23;left:515.5px;">Phrase Match</span>
<span class="t" style="top:147.00px;font-size:21px;line-height:29px;letter-spacing:0.115px;color:#191b23;left:672.0px;">Exact Match</span>
<span class="t" style="top:147.00px;font-size:21px;line-height:29px;letter-spacing:-0.365px;color:#191b23;left:815.5px;">Related</span>
<span class="t" style="top:147.00px;font-size:21px;line-height:29px;letter-spacing:0.070px;color:#8b8e9a;left:924.5px;">Languages</span>
<span class="t" style="top:210.00px;font-size:17.5px;line-height:26px;letter-spacing:0.756px;color:#8361b3;left:35.7px;">AI-powered</span>
<span class="t" style="top:208.00px;font-size:21px;line-height:29px;letter-spacing:-0.017px;color:#191b23;left:190.0px;">asana.com</span>
<span class="t" style="top:208.00px;font-size:21px;line-height:29px;letter-spacing:-0.159px;color:#8b8e9a;left:567.0px;">Personal KD %</span>
<span class="t" style="top:208.00px;font-size:21px;line-height:29px;letter-spacing:0.261px;color:#191b23;left:834.0px;">Show ranking keywords</span>
<span class="t" style="top:268.00px;font-size:21px;line-height:29px;letter-spacing:-0.149px;color:#8b8e9a;left:37.5px;">Volume</span>
<span class="t" style="top:268.00px;font-size:21px;line-height:29px;letter-spacing:-0.729px;color:#8b8e9a;left:181.3px;">KD %</span>
<span class="t" style="top:268.00px;font-size:21px;line-height:29px;letter-spacing:0.131px;color:#8b8e9a;left:307.3px;">Intent</span>
<span class="t" style="top:268.00px;font-size:21px;line-height:29px;letter-spacing:-0.525px;color:#8b8e9a;left:434.7px;">CPC (USD)</span>
<span class="t" style="top:268.00px;font-size:21px;line-height:29px;letter-spacing:0.317px;color:#8b8e9a;left:613.0px;">Include keywords</span>
<span class="t" style="top:268.00px;font-size:21px;line-height:29px;letter-spacing:0.250px;color:#8b8e9a;left:853.7px;">Exclude keywords</span>
<span class="t" style="top:268.00px;font-size:21px;line-height:29px;letter-spacing:0.405px;color:#8b8e9a;left:1100.5px;">Advanced filters</span>
<span class="t" style="top:345.00px;font-size:21px;line-height:29px;letter-spacing:0.094px;color:#191b23;left:52.7px;">By number</span>
<span class="t" style="top:345.00px;font-size:21px;line-height:29px;letter-spacing:0.094px;color:#191b23;left:183.6px;">By volume</span>
<span class="t" style="top:408.00px;font-size:17px;line-height:25px;letter-spacing:-0.053px;color:#191b23;left:42.7px;">All</span>
<span class="t" style="top:408.00px;font-size:17px;line-height:25px;letter-spacing:1.008px;color:#191b23;left:194.5px;">366,202</span>
<span class="t" style="top:469.00px;font-size:17px;line-height:25px;letter-spacing:0.771px;color:#191b23;left:74.5px;">jobs</span>
<span class="t" style="top:469.00px;font-size:17px;line-height:25px;letter-spacing:-1.000px;color:#191b23;left:215.0px;">21,197</span>
<span class="t" style="top:533.00px;font-size:17px;line-height:25px;letter-spacing:0.528px;color:#191b23;left:74.5px;">salary</span>
<span class="t" style="top:533.00px;font-size:17px;line-height:25px;letter-spacing:0.200px;color:#191b23;left:209.0px;">18,693</span>
<span class="t" style="top:597.00px;font-size:17px;line-height:25px;letter-spacing:0.893px;color:#191b23;left:74.5px;">software</span>
<span class="t" style="top:597.00px;font-size:17px;line-height:25px;letter-spacing:-0.300px;color:#191b23;left:211.5px;">17,680</span>
<span class="t" style="top:661.00px;font-size:17px;line-height:25px;letter-spacing:0.831px;color:#191b23;left:74.5px;">system</span>
<span class="t" style="top:661.00px;font-size:17px;line-height:25px;letter-spacing:-0.200px;color:#191b23;left:211.0px;">15,507</span>
<span class="t" style="top:724.00px;font-size:17px;line-height:25px;letter-spacing:0.939px;color:#191b23;left:74.5px;">construction</span>
<span class="t" style="top:724.00px;font-size:17px;line-height:25px;letter-spacing:-0.700px;color:#191b23;left:213.5px;">14,134</span>
<span class="t" style="top:788.00px;font-size:17px;line-height:25px;letter-spacing:1.430px;color:#191b23;left:74.5px;">pdf</span>
<span class="t" style="top:788.00px;font-size:17px;line-height:25px;letter-spacing:-0.387px;color:#191b23;left:221.0px;">9,122</span>
<span class="t" style="top:852.00px;font-size:17px;line-height:25px;letter-spacing:0.894px;color:#191b23;left:74.5px;">course</span>
<span class="t" style="top:852.00px;font-size:17px;line-height:25px;letter-spacing:0.738px;color:#191b23;left:216.5px;">8,065</span>
<span class="t" style="top:916.00px;font-size:17px;line-height:25px;letter-spacing:0.925px;color:#191b23;left:74.5px;">certificate</span>
<span class="t" style="top:916.00px;font-size:17px;line-height:25px;letter-spacing:0.863px;color:#191b23;left:216.0px;">8,054</span>
<span class="t" style="top:980.00px;font-size:17px;line-height:25px;letter-spacing:0.693px;color:#191b23;left:74.5px;">tool</span>
<span class="t" style="top:980.00px;font-size:17px;line-height:25px;letter-spacing:-0.137px;color:#191b23;left:220.0px;">8,051</span>
<span class="t" style="top:345.00px;font-size:21px;line-height:29px;letter-spacing:0.246px;color:#191b23;left:366.0px;">All keywor...</span>
<span class="t" style="top:345.00px;font-size:21px;line-height:29px;letter-spacing:1.263px;color:#191b23;font-weight:700;-webkit-text-stroke:0;left:491.5px;">366,202</span>
<span class="t" style="top:345.00px;font-size:21px;line-height:29px;letter-spacing:0.202px;color:#191b23;left:594.0px;">Total Volu...</span>
<span class="t" style="top:345.00px;font-size:21px;line-height:29px;letter-spacing:1.133px;color:#191b23;font-weight:700;-webkit-text-stroke:0;left:719.0px;">4,323,380</span>
<span class="t" style="top:345.00px;font-size:21px;line-height:29px;letter-spacing:-0.069px;color:#191b23;left:841.0px;">Average KD:</span>
<span class="t" style="top:345.00px;font-size:21px;line-height:29px;letter-spacing:1.484px;color:#191b23;font-weight:700;-webkit-text-stroke:0;left:965.0px;">29%</span>
<span class="t" style="top:344.00px;font-size:21px;line-height:29px;letter-spacing:0.368px;color:#fff;left:1081.0px;-webkit-text-stroke:0.55px #fff;">Send keywords</span>
<span class="t" style="top:344.00px;font-size:21px;line-height:29px;letter-spacing:0.156px;color:#777a85;left:1301.5px;">Update</span>
<span class="t" style="top:348.00px;font-size:17px;line-height:25px;letter-spacing:0.961px;color:#777a85;left:1393.5px;">0/1,000</span>
<span class="t" style="top:408.00px;font-size:17px;line-height:25px;letter-spacing:0.810px;color:#191b23;left:412.5px;">Keyword</span>
<span class="t" style="top:408.00px;font-size:17px;line-height:25px;letter-spacing:0.791px;color:#191b23;left:713.5px;">Intent</span>
<span class="t" style="top:408.00px;font-size:17px;line-height:25px;letter-spacing:0.759px;color:#191b23;left:792.0px;">Volume</span>
<span class="t" style="top:408.00px;font-size:17px;line-height:25px;letter-spacing:0.555px;color:#191b23;left:914.0px;">Trend</span>
<span class="t" style="top:408.00px;font-size:17px;line-height:25px;letter-spacing:0.017px;color:#191b23;left:1051.0px;">Pot.</span>
<span class="t" style="top:432.00px;font-size:17px;line-height:25px;letter-spacing:0.867px;color:#191b23;left:1030.0px;">Traffic</span>
<span class="t" style="top:408.00px;font-size:17px;line-height:25px;letter-spacing:0.051px;color:#191b23;left:1136.0px;">PKD %</span>
<span class="t" style="top:408.00px;font-size:17px;line-height:25px;letter-spacing:0.344px;color:#191b23;left:1239.5px;">KD %</span>
<span class="t" style="top:408.00px;font-size:17px;line-height:25px;letter-spacing:0.047px;color:#191b23;left:1349.0px;">CPC</span>
<span class="t" style="top:432.00px;font-size:17px;line-height:25px;letter-spacing:0.320px;color:#191b23;left:1336.5px;">(USD)</span>
<span class="t" style="top:408.00px;font-size:17px;line-height:25px;letter-spacing:0.625px;color:#191b23;left:1425.0px;">Com.</span>
<span class="t" style="top:408.00px;font-size:17px;line-height:25px;letter-spacing:-0.734px;color:#191b23;left:1497.5px;">SF</span>
<span class="t" style="top:490.00px;font-size:21px;line-height:29px;letter-spacing:0.578px;color:#476d87;left:441.5px;">project</span>
<span class="t" style="top:519.00px;font-size:21px;line-height:29px;letter-spacing:0.214px;color:#476d87;left:441.5px;">management</span>
<span class="t" style="top:522.00px;font-size:17.5px;line-height:26px;letter-spacing:4.031px;color:#315f88;left:617.3px;-webkit-text-stroke:0.5px #315f88;">#7</span>
<span class="t" style="top:493.00px;font-size:16.5px;line-height:24px;letter-spacing:0.000px;color:#2f6591;font-weight:700;-webkit-text-stroke:0;left:710.5px;width:23.5px;text-align:center;-webkit-text-stroke:0;">I</span>
<span class="t" style="top:490.00px;font-size:21px;line-height:29px;letter-spacing:0.013px;color:#191b23;left:805.0px;">301,000</span>
<span class="t" style="top:490.00px;font-size:21px;line-height:29px;letter-spacing:-1.582px;color:#191b23;left:1034.5px;">11.6K</span>
<span class="t" style="top:490.00px;font-size:21px;line-height:29px;letter-spacing:-0.188px;color:#191b23;left:1151.2px;">0</span>
<span class="t" style="top:490.00px;font-size:21px;line-height:29px;letter-spacing:-0.359px;color:#191b23;left:1232.8px;">79</span>
<span class="t" style="top:490.00px;font-size:21px;line-height:29px;letter-spacing:-0.092px;color:#191b23;left:1344.4px;">8.97</span>
<span class="t" style="top:490.00px;font-size:21px;line-height:29px;letter-spacing:-0.058px;color:#191b23;left:1427.0px;">0.35</span>
<span class="t" style="top:490.00px;font-size:21px;line-height:29px;letter-spacing:-0.188px;color:#696b74;left:1539.5px;">7</span>
<span class="t" style="top:584.00px;font-size:21px;line-height:29px;letter-spacing:0.326px;color:#476d87;left:441.5px;">project management</span>
<span class="t" style="top:613.00px;font-size:21px;line-height:29px;letter-spacing:0.607px;color:#476d87;left:441.5px;">certification</span>
<span class="t" style="top:587.00px;font-size:16.5px;line-height:24px;letter-spacing:0.000px;color:#2f6591;font-weight:700;-webkit-text-stroke:0;left:710.5px;width:23.5px;text-align:center;-webkit-text-stroke:0;">I</span>
<span class="t" style="top:584.00px;font-size:21px;line-height:29px;letter-spacing:0.493px;color:#191b23;left:814.3px;">40,500</span>
<span class="t" style="top:584.00px;font-size:21px;line-height:29px;letter-spacing:-1.159px;color:#191b23;left:1059.3px;">77</span>
<span class="t" style="top:584.00px;font-size:21px;line-height:29px;letter-spacing:0.841px;color:#191b23;left:1138.5px;">48</span>
<span class="t" style="top:584.00px;font-size:21px;line-height:29px;letter-spacing:-0.359px;color:#191b23;left:1232.8px;">72</span>
<span class="t" style="top:584.00px;font-size:21px;line-height:29px;letter-spacing:-0.092px;color:#191b23;left:1344.4px;">6.56</span>
<span class="t" style="top:584.00px;font-size:21px;line-height:29px;letter-spacing:-0.058px;color:#191b23;left:1427.0px;">0.83</span>
<span class="t" style="top:584.00px;font-size:21px;line-height:29px;letter-spacing:-0.188px;color:#696b74;left:1539.5px;">8</span>
<span class="t" style="top:678.00px;font-size:21px;line-height:29px;letter-spacing:0.326px;color:#476d87;left:441.5px;">project management</span>
<span class="t" style="top:707.00px;font-size:21px;line-height:29px;letter-spacing:0.518px;color:#476d87;left:441.5px;">software</span>
<span class="t" style="top:710.00px;font-size:17.5px;line-height:26px;letter-spacing:0.498px;color:#315f88;left:575.8px;-webkit-text-stroke:0.5px #315f88;">#13</span>
<span class="t" style="top:681.00px;font-size:16.5px;line-height:24px;letter-spacing:0.000px;color:#8a5a08;font-weight:700;-webkit-text-stroke:0;left:710.5px;width:23.5px;text-align:center;-webkit-text-stroke:0;">C</span>
<span class="t" style="top:678.00px;font-size:21px;line-height:29px;letter-spacing:-0.747px;color:#191b23;left:820.5px;">33,100</span>
<span class="t" style="top:678.00px;font-size:21px;line-height:29px;letter-spacing:-0.773px;color:#191b23;left:1048.0px;">737</span>
<span class="t" style="top:678.00px;font-size:21px;line-height:29px;letter-spacing:-4.159px;color:#191b23;left:1143.5px;">12</span>
<span class="t" style="top:678.00px;font-size:21px;line-height:29px;letter-spacing:-0.359px;color:#191b23;left:1232.8px;">75</span>
<span class="t" style="top:678.00px;font-size:21px;line-height:29px;letter-spacing:-0.766px;color:#191b23;left:1335.5px;">18.33</span>
<span class="t" style="top:678.00px;font-size:21px;line-height:29px;letter-spacing:-1.625px;color:#191b23;left:1431.7px;">0.18</span>
<span class="t" style="top:678.00px;font-size:21px;line-height:29px;letter-spacing:-0.188px;color:#696b74;left:1539.5px;">8</span>
<span class="t" style="top:772.00px;font-size:21px;line-height:29px;letter-spacing:0.287px;color:#476d87;left:441.5px;">management in software</span>
<span class="t" style="top:801.00px;font-size:21px;line-height:29px;letter-spacing:0.578px;color:#476d87;left:441.5px;">project</span>
<span class="t" style="top:804.00px;font-size:17.5px;line-height:26px;letter-spacing:2.248px;color:#315f88;left:559.3px;-webkit-text-stroke:0.5px #315f88;">#33</span>
<span class="t" style="top:775.00px;font-size:16.5px;line-height:24px;letter-spacing:0.000px;color:#2f6591;font-weight:700;-webkit-text-stroke:0;left:710.5px;width:23.5px;text-align:center;-webkit-text-stroke:0;">I</span>
<span class="t" style="top:772.00px;font-size:21px;line-height:29px;letter-spacing:-1.447px;color:#191b23;left:824.0px;">27,100</span>
<span class="t" style="top:772.00px;font-size:21px;line-height:29px;letter-spacing:-0.023px;color:#191b23;left:1046.5px;">256</span>
<span class="t" style="top:772.00px;font-size:21px;line-height:29px;letter-spacing:0.341px;color:#191b23;left:1139.0px;">32</span>
<span class="t" style="top:772.00px;font-size:21px;line-height:29px;letter-spacing:0.941px;color:#191b23;left:1231.5px;">43</span>
<span class="t" style="top:772.00px;font-size:21px;line-height:29px;letter-spacing:-0.766px;color:#191b23;left:1335.5px;">18.33</span>
<span class="t" style="top:772.00px;font-size:21px;line-height:29px;letter-spacing:-1.625px;color:#191b23;left:1431.7px;">0.18</span>
<span class="t" style="top:772.00px;font-size:21px;line-height:29px;letter-spacing:-0.188px;color:#696b74;left:1539.5px;">8</span>
<span class="t" style="top:867.00px;font-size:21px;line-height:29px;letter-spacing:0.326px;color:#476d87;left:441.5px;">project management</span>
<span class="t" style="top:896.00px;font-size:21px;line-height:29px;letter-spacing:0.328px;color:#476d87;left:441.5px;">institute</span>
<span class="t" style="top:869.00px;font-size:16.5px;line-height:24px;letter-spacing:0.000px;color:#7b42bf;font-weight:700;-webkit-text-stroke:0;left:710.5px;width:23.5px;text-align:center;-webkit-text-stroke:0;">N</span>
<span class="t" style="top:867.00px;font-size:21px;line-height:29px;letter-spacing:-1.447px;color:#191b23;left:824.0px;">27,100</span>
<span class="t" style="top:867.00px;font-size:21px;line-height:29px;letter-spacing:-4.359px;color:#191b23;left:1062.5px;">51</span>
<span class="t" style="top:867.00px;font-size:21px;line-height:29px;letter-spacing:0.341px;color:#191b23;left:1139.0px;">45</span>
<span class="t" style="top:867.00px;font-size:21px;line-height:29px;letter-spacing:0.941px;color:#191b23;left:1231.5px;">84</span>
<span class="t" style="top:867.00px;font-size:21px;line-height:29px;letter-spacing:-0.792px;color:#191b23;left:1346.5px;">1.24</span>
<span class="t" style="top:867.00px;font-size:21px;line-height:29px;letter-spacing:-1.392px;color:#191b23;left:1431.0px;">0.31</span>
<span class="t" style="top:867.00px;font-size:21px;line-height:29px;letter-spacing:-0.188px;color:#696b74;left:1539.5px;">9</span>
<span class="t" style="top:960.00px;font-size:21px;line-height:29px;letter-spacing:0.304px;color:#476d87;left:441.5px;">project manager</span>
<span class="t" style="top:962.00px;font-size:16.5px;line-height:24px;letter-spacing:0.000px;color:#8a5a08;font-weight:700;-webkit-text-stroke:0;left:710.5px;width:23.5px;text-align:center;-webkit-text-stroke:0;">C</span>
<span class="t" style="top:960.00px;font-size:21px;line-height:29px;letter-spacing:-1.447px;color:#191b23;left:824.0px;">27,100</span>
<span class="t" style="top:960.00px;font-size:21px;line-height:29px;letter-spacing:-4.359px;color:#191b23;left:1062.5px;">51</span>
<span class="t" style="top:960.00px;font-size:21px;line-height:29px;letter-spacing:0.341px;color:#191b23;left:1139.0px;">43</span>
<span class="t" style="top:960.00px;font-size:21px;line-height:29px;letter-spacing:-0.359px;color:#191b23;left:1232.8px;">73</span>
<span class="t" style="top:960.00px;font-size:21px;line-height:29px;letter-spacing:-0.092px;color:#191b23;left:1344.4px;">8.97</span>
<span class="t" style="top:960.00px;font-size:21px;line-height:29px;letter-spacing:-0.058px;color:#191b23;left:1427.0px;">0.35</span>
<span class="t" style="top:960.00px;font-size:21px;line-height:29px;letter-spacing:-1.859px;color:#696b74;left:1539.5px;">10</span>
</body></html>
